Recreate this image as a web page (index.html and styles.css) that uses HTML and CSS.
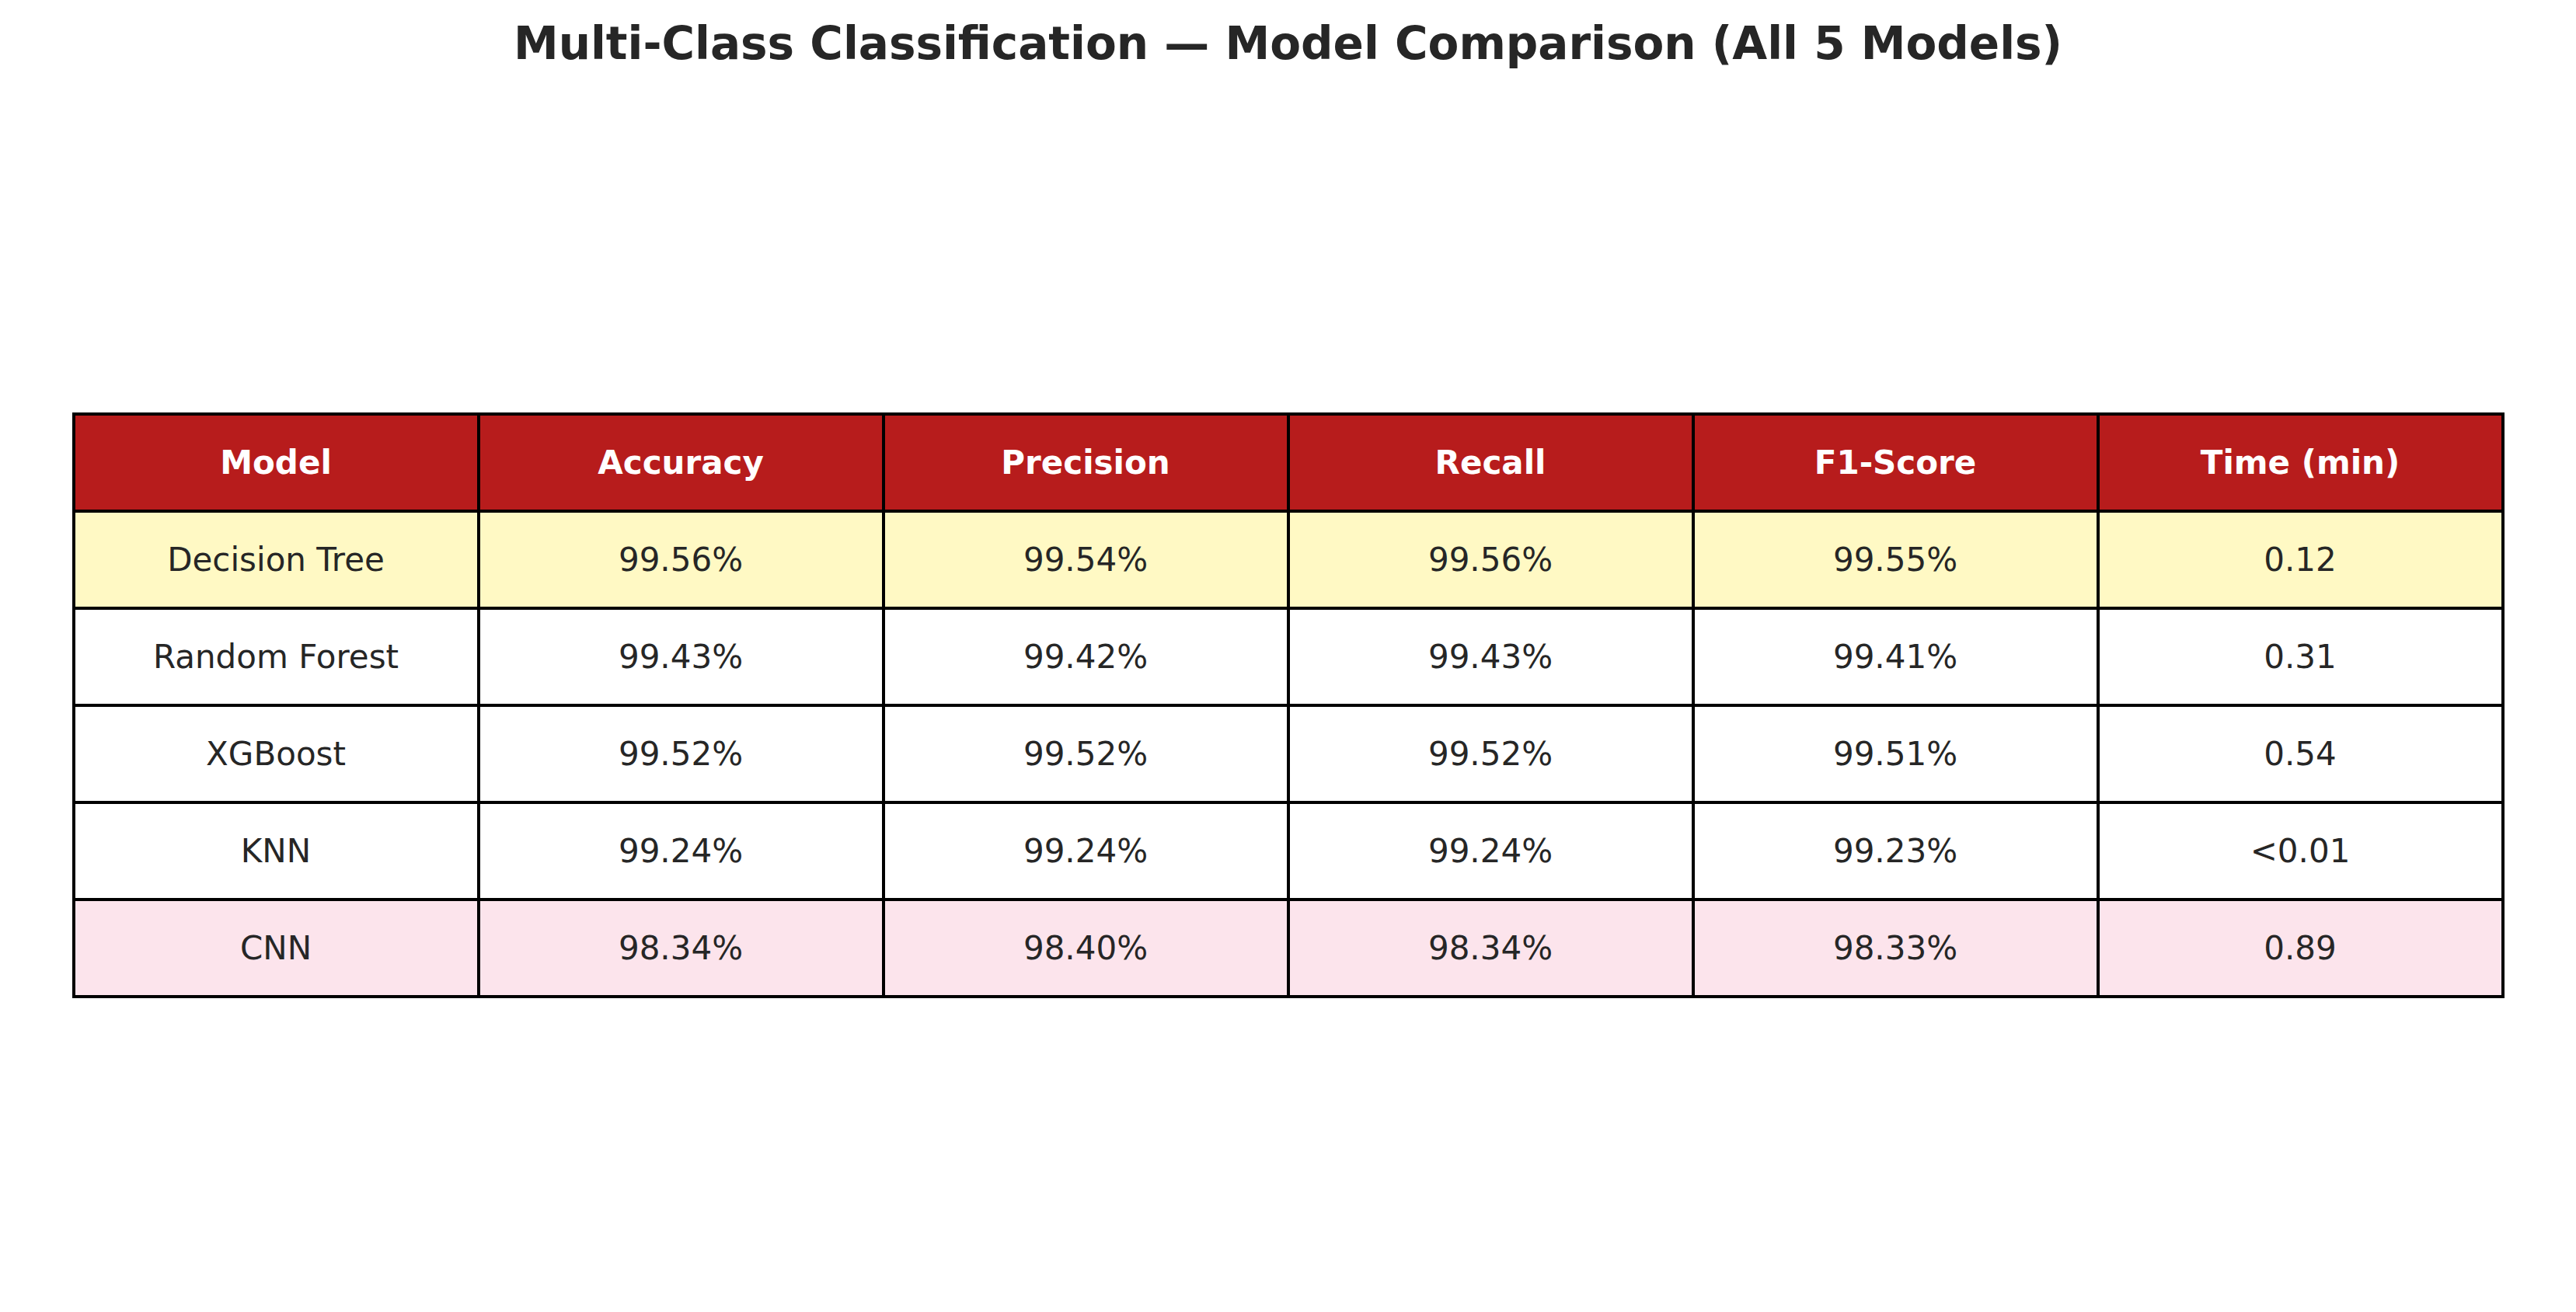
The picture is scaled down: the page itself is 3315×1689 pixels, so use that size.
FILE: index.html
```html
<!DOCTYPE html>
<html lang="en">
<head>
<meta charset="utf-8">
<title>Multi-Class Classification — Model Comparison</title>
<link rel="stylesheet" href="styles.css">
</head>
<body>
<main class="page">
  <h1 class="title">Multi-Class Classification — Model Comparison (All 5 Models)</h1>
  <div class="table-wrap">
    <table class="results">
      <thead>
        <tr>
          <th>Model</th>
          <th>Accuracy</th>
          <th>Precision</th>
          <th>Recall</th>
          <th>F1-Score</th>
          <th>Time (min)</th>
        </tr>
      </thead>
      <tbody>
        <tr class="best">
          <td>Decision Tree</td><td>99.56%</td><td>99.54%</td><td>99.56%</td><td>99.55%</td><td>0.12</td>
        </tr>
        <tr>
          <td>Random Forest</td><td>99.43%</td><td>99.42%</td><td>99.43%</td><td>99.41%</td><td>0.31</td>
        </tr>
        <tr>
          <td>XGBoost</td><td>99.52%</td><td>99.52%</td><td>99.52%</td><td>99.51%</td><td>0.54</td>
        </tr>
        <tr>
          <td>KNN</td><td>99.24%</td><td>99.24%</td><td>99.24%</td><td>99.23%</td><td>&lt;0.01</td>
        </tr>
        <tr class="worst">
          <td>CNN</td><td>98.34%</td><td>98.40%</td><td>98.34%</td><td>98.33%</td><td>0.89</td>
        </tr>
      </tbody>
    </table>
  </div>
</main>
</body>
</html>
```

FILE: styles.css
```css
html, body {
  margin: 0;
  padding: 0;
  background: #ffffff;
}

.page {
  padding-top: 27px;
  font-family: "DejaVu Sans", "Liberation Sans", sans-serif;
  color: #262626;
}

.title {
  margin: 0;
  text-align: center;
  font-size: 58px;
  line-height: 58px;
  font-weight: bold;
  color: #262626;
}

.table-wrap {
  margin-top: 446px;
  display: flex;
  justify-content: center;
}

.results {
  border-collapse: separate;
  border-spacing: 4px;
  background: #000000;
}

.results th,
.results td {
  width: 517px;
  height: 121px;
  padding: 0;
  text-align: center;
  vertical-align: middle;
  font-size: 42px;
  line-height: 1;
  background: #ffffff;
  color: #262626;
  font-weight: normal;
}

.results th {
  background: #b71c1c;
  color: #ffffff;
  font-weight: bold;
}

.results tr.best td {
  background: #fff9c4;
}

.results tr.worst td {
  background: #fce4ec;
}
```
